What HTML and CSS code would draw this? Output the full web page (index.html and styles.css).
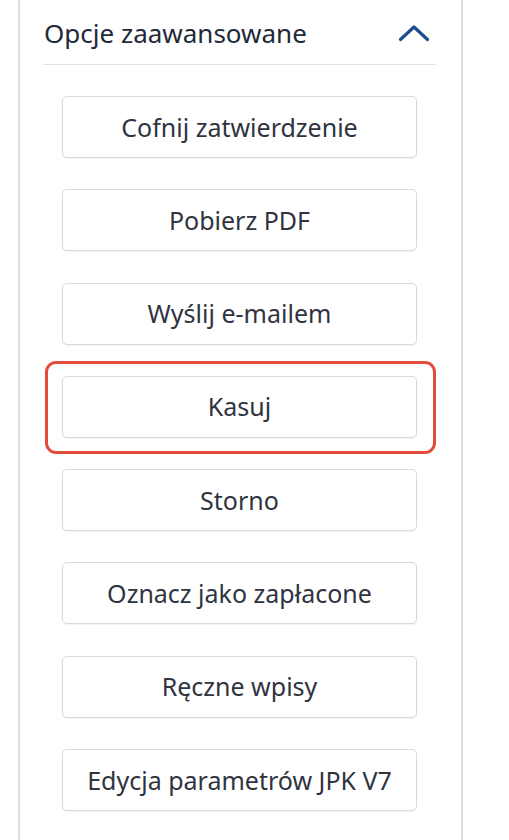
FILE: index.html
```html
<!DOCTYPE html>
<html lang="pl">
<head>
<meta charset="utf-8">
<link rel="stylesheet" href="styles.css">
</head>
<body>
<div class="panel">
  <div class="head">
    <span class="title">Opcje zaawansowane</span>
    <svg class="chev" width="32" height="18" viewBox="0 0 32 18"><path d="M2.5 15.5 L16 3 L29.5 15.5" fill="none" stroke="#1d4e8f" stroke-width="3.2" stroke-linecap="round" stroke-linejoin="round"/></svg>
  </div>
  <div class="list">
    <div class="item"><button class="btn">Cofnij zatwierdzenie</button></div>
    <div class="item"><button class="btn">Pobierz PDF</button></div>
    <div class="item"><button class="btn">Wyślij e-mailem</button></div>
    <div class="item highlight"><button class="btn">Kasuj</button></div>
    <div class="item"><button class="btn">Storno</button></div>
    <div class="item"><button class="btn">Oznacz jako zapłacone</button></div>
    <div class="item"><button class="btn">Ręczne wpisy</button></div>
    <div class="item"><button class="btn">Edycja parametrów JPK V7</button></div>
  </div>
</div>
</body>
</html>
```
FILE: styles.css
```css
html, body {
  margin: 0;
  background: #ffffff;
}
body {
  font-family: "Noto Sans", "DejaVu Sans", sans-serif;
  color: #2f3440;
  height: 840px;
  overflow: hidden;
}
.panel {
  margin-left: 18px;
  width: 393px;
  height: 840px;
  border-left: 2px solid #dcdcdc;
  border-right: 2px solid #dcdcdc;
  padding: 0 25px 0 23px;
}
.head {
  height: 64px;
  display: flex;
  align-items: center;
  justify-content: space-between;
  border-bottom: 1px solid #e2e2e2;
  padding-left: 1px;
  padding-right: 6px;
}
.title {
  font-size: 26px;
  color: #222a38;
  line-height: 1;
  margin-top: 1px;
}
.chev { display: block; margin-top: 1px; }
.list {
  display: flex;
  flex-direction: column;
  align-items: center;
  gap: 31.3px;
  padding-top: 31px;
}
.item {
  position: relative;
  width: 355px;
  height: 62px;
}
.btn {
  width: 100%;
  height: 100%;
  background: #fff;
  border: 1.5px solid #d9d9d9;
  border-radius: 5px;
  box-shadow: 0 1px 1px rgba(0,0,0,0.05);
  font-family: inherit;
  font-size: 25px;
  line-height: 1;
  color: #2f3440;
  padding: 0;
}
.highlight::after {
  content: "";
  position: absolute;
  top: -15px;
  bottom: -16px;
  left: -17px;
  right: -19px;
  border: 3px solid #e24d3b;
  border-radius: 11px;
  pointer-events: none;
}
```
